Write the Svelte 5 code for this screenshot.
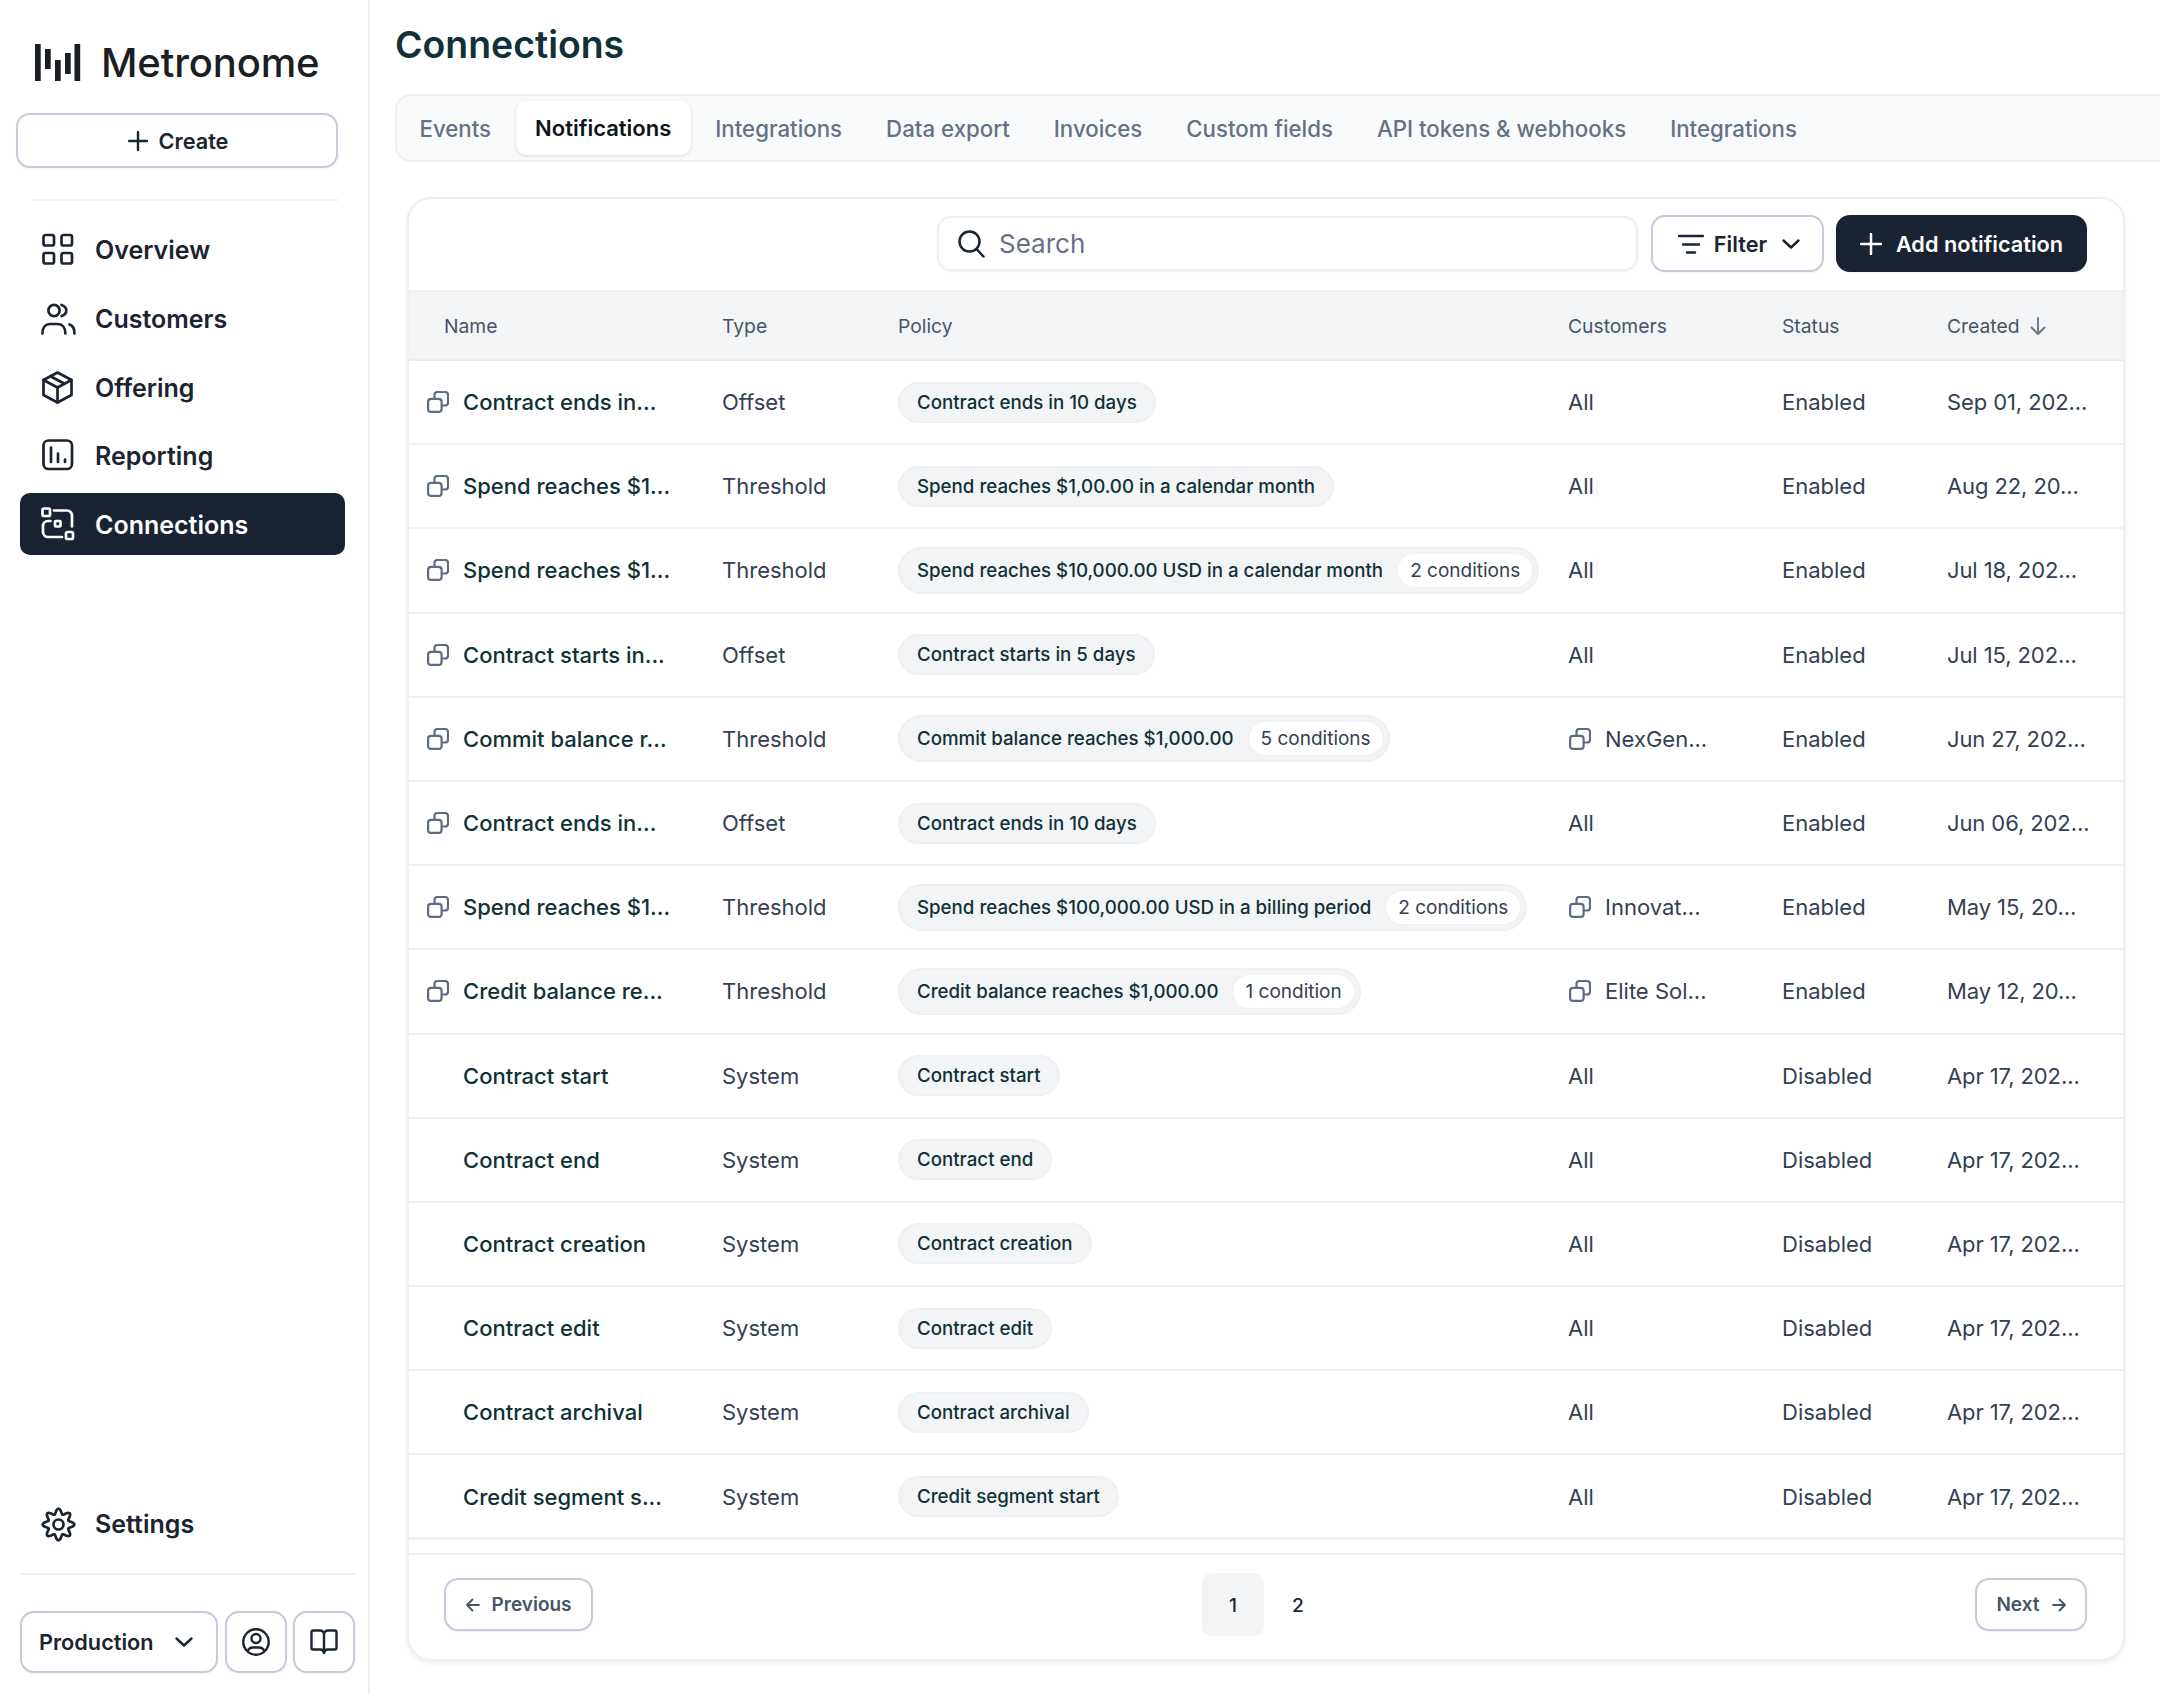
<script lang="ts">
    type Row = {
        name: string,
        linked?: boolean,
        type: string,
        policy: string,
        conditions?: string,
        customer?: string,
        status: string,
        created: string,
    };

    const nav = ['Overview', 'Customers', 'Offering', 'Reporting', 'Connections'];
    const tabs = ['Events', 'Notifications', 'Integrations', 'Data export', 'Invoices', 'Custom fields', 'API tokens & webhooks', 'Integrations'];

    const rows: Row[] = [
        { name: 'Contract ends in...', linked: true, type: 'Offset', policy: 'Contract ends in 10 days', status: 'Enabled', created: 'Sep 01, 202...' },
        { name: 'Spend reaches $1...', linked: true, type: 'Threshold', policy: 'Spend reaches $1,00.00 in a calendar month', status: 'Enabled', created: 'Aug 22, 20...' },
        { name: 'Spend reaches $1...', linked: true, type: 'Threshold', policy: 'Spend reaches $10,000.00 USD in a calendar month', conditions: '2 conditions', status: 'Enabled', created: 'Jul 18, 202...' },
        { name: 'Contract starts in...', linked: true, type: 'Offset', policy: 'Contract starts in 5 days', status: 'Enabled', created: 'Jul 15, 202...' },
        { name: 'Commit balance r...', linked: true, type: 'Threshold', policy: 'Commit balance reaches $1,000.00', conditions: '5 conditions', customer: 'NexGen...', status: 'Enabled', created: 'Jun 27, 202...' },
        { name: 'Contract ends in...', linked: true, type: 'Offset', policy: 'Contract ends in 10 days', status: 'Enabled', created: 'Jun 06, 202...' },
        { name: 'Spend reaches $1...', linked: true, type: 'Threshold', policy: 'Spend reaches $100,000.00 USD in a billing period', conditions: '2 conditions', customer: 'Innovat...', status: 'Enabled', created: 'May 15, 20...' },
        { name: 'Credit balance re...', linked: true, type: 'Threshold', policy: 'Credit balance reaches $1,000.00', conditions: '1 condition', customer: 'Elite Sol...', status: 'Enabled', created: 'May 12, 20...' },
        { name: 'Contract start', type: 'System', policy: 'Contract start', status: 'Disabled', created: 'Apr 17, 202...' },
        { name: 'Contract end', type: 'System', policy: 'Contract end', status: 'Disabled', created: 'Apr 17, 202...' },
        { name: 'Contract creation', type: 'System', policy: 'Contract creation', status: 'Disabled', created: 'Apr 17, 202...' },
        { name: 'Contract edit', type: 'System', policy: 'Contract edit', status: 'Disabled', created: 'Apr 17, 202...' },
        { name: 'Contract archival', type: 'System', policy: 'Contract archival', status: 'Disabled', created: 'Apr 17, 202...' },
        { name: 'Credit segment s...', type: 'System', policy: 'Credit segment start', status: 'Disabled', created: 'Apr 17, 202...' },
    ];

    // scalloped outline for the settings cog
    const cog = Array.from({ length: 96 }, (_, i) => {
        const a = (i / 96) * Math.PI * 2;
        const r = 13.2 + 2.6 * Math.cos(a * 8);
        return `${(16.5 + r * Math.sin(a)).toFixed(2)} ${(16.5 - r * Math.cos(a)).toFixed(2)}`;
    }).join(' L');
</script>

{#snippet copy()}
    <svg class="copy" width="22" height="22" viewBox="0 0 22 22" fill="none" stroke="#5f6b85" stroke-width="2.200">
        <rect x="1.100" y="7.800" width="13.500" height="13.100" rx="3" />
        <path d="M7.500 7.500V4a3 3 0 0 1 3-3H18a3 3 0 0 1 3 3v7.500a3 3 0 0 1-3 3h-3.400" />
    </svg>
{/snippet}

{#snippet navIcon(name: string)}
    <svg class="nav-icon" width="32" height="34" viewBox="0 0 32 34" fill="none" stroke="currentColor" stroke-width="2.700" stroke-linecap="round" stroke-linejoin="round">
        {#if name === 'Overview'}
            <rect x="1.500" y="2" width="10.500" height="10.500" rx="2" />
            <rect x="19.500" y="2" width="10.500" height="10.500" rx="2" />
            <rect x="1.500" y="20" width="10.500" height="10.500" rx="2" />
            <rect x="19.500" y="20" width="10.500" height="10.500" rx="2" />
        {:else if name === 'Customers'}
            <circle cx="12" cy="8.500" r="5.600" />
            <path d="M0.400 31.500c0-6 3-9.500 8-9.500h7c5 0 8 3.500 8 9.500" />
            <path d="M19.500 3c3 1 4.800 3 4.800 5.500s-1.800 4.500-4.800 5.500" />
            <path d="M27.500 22.500c3.500 1 4.900 4 4.900 9" />
        {:else if name === 'Offering'}
            <path d="M15.500 1.500l14 7.500v15l-14 7.500-14-7.500V9z" />
            <path d="M1.500 9l14 7.500 14-7.500M15.500 16.500v15M8.500 5.200l14 7.500" />
        {:else if name === 'Reporting'}
            <rect x="1.500" y="1.500" width="28.500" height="28.500" rx="5" />
            <path d="M9 8.500v14.500M16 14.500v8.500M23 20.500v2.500" />
        {:else if name === 'Connections'}
            <g transform="translate(-1 -1)">
                <rect x="1.500" y="1.500" width="7.500" height="7.500" rx="1.500" />
                <rect x="14" y="14" width="5.500" height="5.500" rx="1" />
                <rect x="25" y="25" width="7" height="7" rx="1.500" />
                <path d="M13 3.500h13a5 5 0 0 1 5 5v11" />
                <path d="M9.500 14H7a5 5 0 0 0-5 5v6a5 5 0 0 0 5 5h14" />
            </g>
        {/if}
    </svg>
{/snippet}

<div class="page">
    <aside class="sidebar">
        <div class="logo">
            <svg width="46" height="37" viewBox="0 0 46 37" fill="#1b1e23">
                <rect x="0" y="0" width="5.700" height="37" />
                <rect x="10" y="5" width="5.700" height="20" />
                <rect x="20" y="16" width="5.700" height="21" />
                <rect x="30" y="9" width="5.700" height="21" />
                <rect x="39.500" y="0" width="5.700" height="37" />
            </svg>
            <span>Metronome</span>
        </div>

        <button class="btn create">
            <svg width="20" height="20" viewBox="0 0 20 20" fill="none" stroke="currentColor" stroke-width="2.400" stroke-linecap="round"><path d="M10 1v18M1 10h18" /></svg>
            Create
        </button>
        <div class="rule top"></div>

        <nav>
            {#each nav as item}
                <div class={['nav-item', { active: item === 'Connections' }]}>
                    {@render navIcon(item)}
                    <span>{item}</span>
                </div>
            {/each}
        </nav>

        <div class="nav-item settings">
            <svg class="nav-icon" width="33" height="33" viewBox="0 0 33 33" fill="none" stroke="currentColor" stroke-width="2.700" stroke-linejoin="round">
                <path d="M{cog}Z" />
                <circle cx="16.500" cy="16.500" r="5" />
            </svg>
            <span>Settings</span>
        </div>
        <div class="rule bottom"></div>

        <div class="env">
            <button class="btn production">
                Production
                <svg width="18" height="10" viewBox="0 0 18 10" fill="none" stroke="currentColor" stroke-width="2.400" stroke-linecap="round" stroke-linejoin="round"><path d="M1.500 1.500L9 8.500l7.500-7" /></svg>
            </button>
            <button class="btn square" aria-label="Account">
                <svg width="28" height="28" viewBox="0 0 28 28" fill="none" stroke="currentColor" stroke-width="2.400"><circle cx="14" cy="14" r="12.700" /><circle cx="14" cy="10.500" r="4.500" /><path d="M5.500 23.500c1-3 3-4 5.500-4h6c2.500 0 4.500 1 5.500 4" /></svg>
            </button>
            <button class="btn square" aria-label="Docs">
                <svg width="28" height="26" viewBox="0 0 28 26" fill="none" stroke="currentColor" stroke-width="2.400" stroke-linejoin="round"><path d="M14 5.500C14 3 12.500 1.500 10 1.500H3A1.500 1.500 0 0 0 1.500 3v16A1.500 1.500 0 0 0 3 20.500h7.500c1.500 0 3 .8 3.500 3.500.5-2.700 2-3.500 3.500-3.500H25a1.500 1.500 0 0 0 1.500-1.500V3A1.500 1.500 0 0 0 25 1.500h-7C15.500 1.500 14 3 14 5.500zM14 5.500V24" /></svg>
            </button>
        </div>
    </aside>

    <main>
        <h1>Connections</h1>

        <div class="tabs">
            {#each tabs as tab}
                <div class={['tab', { active: tab === 'Notifications' }]}>{tab}</div>
            {/each}
        </div>

        <section class="card">
            <div class="toolbar">
                <div class="search">
                    <svg width="27" height="28" viewBox="0 0 27 28" fill="none" stroke="#1b2431" stroke-width="2.500" stroke-linecap="round"><circle cx="11.500" cy="11.500" r="10" /><path d="M18.500 19l7 7.500" /></svg>
                    <span>Search</span>
                </div>
                <button class="btn filter">
                    <svg width="26" height="20" viewBox="0 0 26 20" fill="none" stroke="currentColor" stroke-width="2.500" stroke-linecap="round"><path d="M1 2h24M5 10.500h16M9 18.500h8" /></svg>
                    Filter
                    <svg class="chev" width="18" height="10" viewBox="0 0 18 10" fill="none" stroke="currentColor" stroke-width="2.400" stroke-linecap="round" stroke-linejoin="round"><path d="M1.500 1.500L9 8.500l7.500-7" /></svg>
                </button>
                <button class="btn add">
                    <svg width="22" height="22" viewBox="0 0 22 22" fill="none" stroke="currentColor" stroke-width="2.500" stroke-linecap="round"><path d="M11 1v20M1 11h20" /></svg>
                    Add notification
                </button>
            </div>

            <div class="grid head">
                <div class="name-head">Name</div>
                <div>Type</div>
                <div>Policy</div>
                <div>Customers</div>
                <div>Status</div>
                <div class="created-head">
                    Created
                    <svg width="16" height="18" viewBox="0 0 16 18" fill="none" stroke="#667085" stroke-width="1.800" stroke-linecap="round" stroke-linejoin="round"><path d="M8 1v16M1.500 10.500L8 17l6.500-6.500" /></svg>
                </div>
            </div>

            <div class="body">
                {#each rows as row}
                    <div class="grid row">
                        <div class="name">
                            {#if row.linked}{@render copy()}{/if}
                            <span>{row.name}</span>
                        </div>
                        <div>{row.type}</div>
                        <div>
                            <span class={['pill', { 'has-count': row.conditions }]}>
                                <span>{row.policy}</span>
                                {#if row.conditions}<span class="count">{row.conditions}</span>{/if}
                            </span>
                        </div>
                        <div class="customer">
                            {#if row.customer}{@render copy()}<span>{row.customer}</span>{:else}All{/if}
                        </div>
                        <div>{row.status}</div>
                        <div class="date">{row.created}</div>
                    </div>
                {/each}
            </div>

            <div class="footer">
                <button class="btn page-btn">
                    <svg width="14" height="14" viewBox="0 0 14 14" fill="none" stroke="currentColor" stroke-width="1.800" stroke-linecap="round" stroke-linejoin="round"><path d="M13 7H1M6.500 1.500L1 7l5.500 5.500" /></svg>
                    Previous
                </button>
                <div class="pages">
                    <div class="num current">1</div>
                    <div class="num">2</div>
                </div>
                <button class="btn page-btn next">
                    Next
                    <svg width="14" height="14" viewBox="0 0 14 14" fill="none" stroke="currentColor" stroke-width="1.800" stroke-linecap="round" stroke-linejoin="round"><path d="M1 7h12M7.500 1.500L13 7l-5.500 5.500" /></svg>
                </button>
            </div>
        </section>
    </main>
</div>

<style>
    :global(body) {
        margin: 0;
        background: #fff;
        font-family: Inter, "Liberation Sans", sans-serif;
    }

    .page {
        display: flex;
        width: 2160px;
        height: 1694px;
        overflow: hidden;
    }

    /* sidebar */
    .sidebar {
        box-sizing: border-box;
        width: 370px;
        flex: none;
        display: flex;
        flex-direction: column;
        padding: 44px 0 21px 16px;
        border-right: 2px solid #eff0f4;
        color: #1b2431;
    }

    .logo {
        display: flex;
        align-items: center;
        gap: 20px;
        height: 37px;
        margin-left: 19px;
        color: #1b1e23;
        font-size: 40px;
        font-weight: 500;
        letter-spacing: -0.15px;
    }

    .btn {
        box-sizing: border-box;
        display: flex;
        align-items: center;
        justify-content: center;
        background: #fff;
        border: 2px solid #c5cbdb;
        border-radius: 14px;
        font: inherit;
        font-size: 21.700px;
        font-weight: 600;
        color: #1b2431;
        box-shadow: 0 1px 2px rgba(16, 24, 40, 0.05);
    }

    .create {
        width: 322px;
        height: 55px;
        margin-top: 32px;
        padding-left: 8px;
        gap: 11px;
    }

    .rule {
        height: 2px;
        background: #eff0f4;
    }

    .rule.top {
        width: 305px;
        margin: 31px 0 0 17px;
    }

    .rule.bottom {
        width: 335px;
        margin: 19px 0 36px 4px;
    }

    nav {
        display: flex;
        flex-direction: column;
        gap: 6.800px;
        margin-top: 17px;
        flex: 1;
    }

    .nav-item {
        box-sizing: border-box;
        width: 325px;
        height: 62px;
        margin-left: 4px;
        padding: 2px 0 0 22px;
        display: flex;
        align-items: center;
        gap: 21px;
        border-radius: 10px;
        font-size: 25px;
        font-weight: 600;
    }

    .nav-item.settings {
        gap: 20px;
    }

    .nav-item.active {
        background: #1a2332;
        color: #fff;
    }

    .nav-icon {
        flex: none;
        overflow: visible;
    }

    .env {
        display: flex;
        gap: 6.500px;
        margin-left: 4px;
    }

    .production {
        width: 198px;
        height: 62px;
        justify-content: flex-start;
        padding-left: 17px;
        gap: 21px;
    }

    .square {
        width: 62px;
        height: 62px;
    }

    /* main */
    main {
        flex: 1;
        min-width: 0;
        padding: 20px 0 0 25px;
    }

    h1 {
        margin: 0 0 24px;
        font-size: 37.400px;
        line-height: 50px;
        font-weight: 600;
        color: #0f3137;
    }

    .tabs {
        box-sizing: border-box;
        display: flex;
        gap: 5px;
        height: 68px;
        width: 1800px;
        padding: 5px 3px;
        background: #f9fafb;
        border: 2px solid #eff0f4;
        border-radius: 16px;
    }

    .tab {
        display: flex;
        align-items: center;
        padding: 0 19.500px;
        border-radius: 10px;
        font-size: 22.250px;
        font-weight: 500;
        color: #667085;
    }

    .tab.active {
        background: #fff;
        color: #101418;
        font-size: 22px;
        font-weight: 600;
        box-shadow: 0 1px 3px rgba(16, 24, 40, 0.14);
    }

    .card {
        box-sizing: border-box;
        display: flex;
        flex-direction: column;
        width: 1718px;
        height: 1464px;
        margin: 35px 0 0 12px;
        background: #fff;
        border: 2px solid #eff0f4;
        border-radius: 24px;
        box-shadow: 0 2px 4px rgba(16, 24, 40, 0.08);
        overflow: hidden;
    }

    .toolbar {
        box-sizing: border-box;
        display: flex;
        align-items: center;
        justify-content: flex-end;
        gap: 12.500px;
        height: 91px;
        flex: none;
        padding: 0 36px 2px 0;
    }

    .search {
        box-sizing: border-box;
        display: flex;
        align-items: center;
        gap: 14px;
        width: 701px;
        height: 55px;
        padding-left: 19px;
        border: 2px solid #eff0f4;
        border-radius: 14px;
        box-shadow: 0 1px 2px rgba(16, 24, 40, 0.05);
        font-size: 26px;
        color: #667085;
    }

    .filter {
        width: 173px;
        height: 57px;
        padding-right: 2px;
        gap: 10px;
    }

    .chev {
        margin-left: 5px;
    }

    .add {
        width: 251px;
        height: 57px;
        gap: 14px;
        background: #1a2332;
        border-color: #1a2332;
        color: #fff;
    }

    .grid {
        display: grid;
        grid-template-columns: 296px 176px 670px 214px 166px 1fr;
        align-items: center;
        padding-left: 17px;
    }

    .head {
        height: 71px;
        flex: none;
        box-sizing: border-box;
        background: #f3f4f6;
        border-top: 2px solid #eff0f4;
        border-bottom: 2px solid #eaecf0;
        font-size: 19.300px;
        color: #475467;
    }

    .name-head {
        padding-left: 18px;
    }

    .created-head {
        display: flex;
        align-items: center;
        gap: 11px;
        margin-left: -1px;
    }

    .date {
        margin-left: -1px;
        letter-spacing: -0.1px;
    }

    .body {
        flex: 1;
        min-height: 0;
        border-bottom: 2px solid #eff0f4;
    }

    .row {
        box-sizing: border-box;
        height: 84.200px;
        border-bottom: 2px solid #eff0f4;
        font-size: 22px;
        color: #344054;
    }

    .name {
        display: flex;
        align-items: center;
        gap: 14px;
        padding-left: 37px;
        font-weight: 450;
        color: #0f3137;
    }

    .name:has(.copy) {
        padding-left: 1px;
    }

    .copy {
        flex: none;
    }

    .customer {
        display: flex;
        align-items: center;
        gap: 14px;
    }

    .customer .copy {
        margin-left: 1px;
    }

    .pill {
        box-sizing: border-box;
        display: inline-flex;
        align-items: center;
        gap: 15px;
        height: 41px;
        padding: 0 17px;
        background: #f3f4f6;
        border: 2px solid #eff0f4;
        border-radius: 24px;
        font-size: 18.700px;
        font-weight: 500;
        color: #0f3137;
        white-space: nowrap;
    }

    .pill.has-count {
        height: 47px;
        padding-right: 5px;
    }

    .count {
        display: flex;
        align-items: center;
        height: 33px;
        padding: 0 12px;
        background: #fff;
        border-radius: 17px;
        box-shadow: 0 0 0 1px #eff0f4;
        font-size: 19px;
        font-weight: 400;
        color: #344054;
    }

    .footer {
        box-sizing: border-box;
        display: grid;
        grid-template-columns: 1fr auto 1fr;
        align-items: center;
        height: 106px;
        flex: none;
        margin-top: 14px;
        padding: 0 36px 5px 35px;
        border-top: 2px solid #eff0f4;
    }

    .page-btn {
        justify-self: start;
        height: 53px;
        padding: 0 19.500px;
        gap: 12px;
        font-size: 19px;
        color: #475467;
    }

    .page-btn.next {
        justify-self: end;
    }

    .pages {
        display: flex;
        gap: 3px;
    }

    .num {
        display: flex;
        align-items: center;
        justify-content: center;
        width: 62px;
        height: 63px;
        border-radius: 10px;
        font-size: 19.300px;
        font-weight: 500;
        color: #1b2431;
    }

    .num.current {
        background: #f3f4f6;
    }
</style>
